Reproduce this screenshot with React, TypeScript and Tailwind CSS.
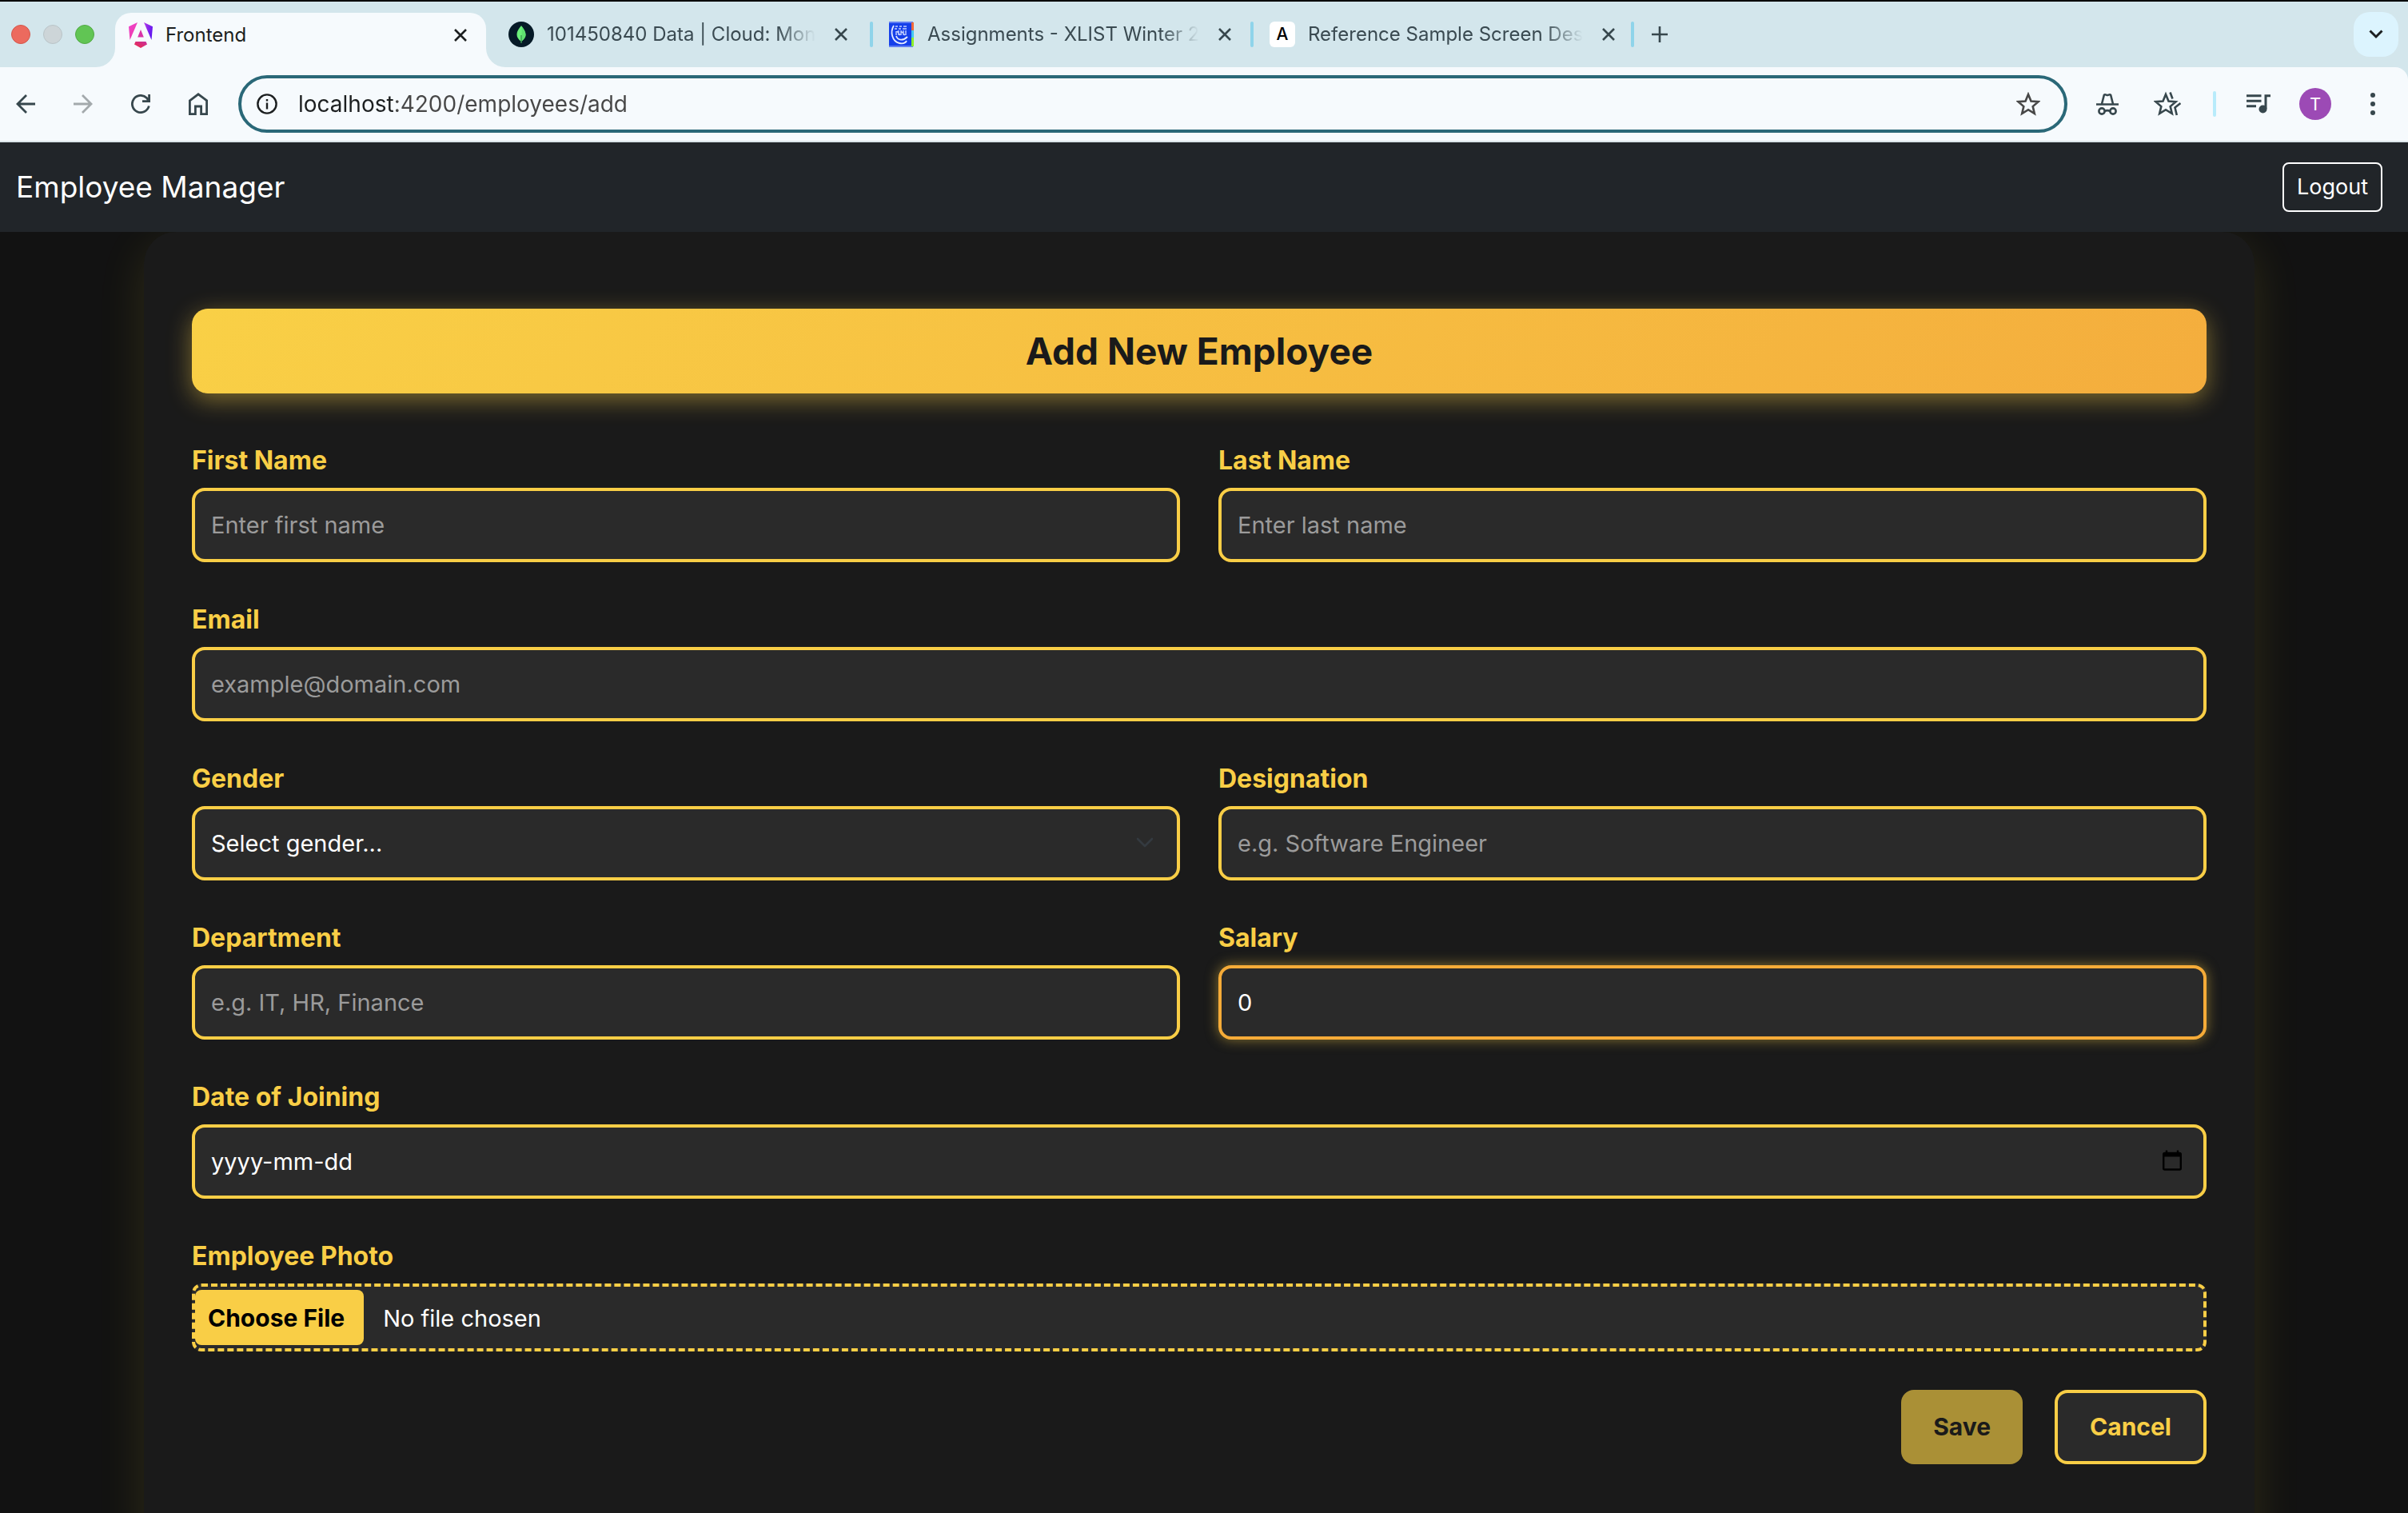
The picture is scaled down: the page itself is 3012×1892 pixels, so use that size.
import React from 'react';

const field =
  'block w-full h-[93px] rounded-[16px] border-4 border-[#f9ce46] bg-[#2a2a2a] px-5 text-[29px] leading-[45px] text-white placeholder:text-[#9b9b9b] outline-none';
const labelCls = 'block mb-2.5 text-[32px] leading-[48px] font-bold text-[#f9ce46]';

function Field({ label, id, children }: { label: string; id: string; children: React.ReactNode }) {
  return (
    <div>
      <label htmlFor={id} className={labelCls}>{label}</label>
      {children}
    </div>
  );
}

function Cross() {
  return (
    <svg viewBox="0 0 16 16" className="size-4" fill="none" stroke="currentColor" strokeWidth="2.6">
      <path d="M1 1L15 15M15 1L1 15" />
    </svg>
  );
}

function AngularIcon() {
  return (
    <svg viewBox="0 0 30 32" className="w-[30px] h-8 shrink-0">
      <defs>
        <linearGradient id="wing-left" x1="0" y1="0" x2="0.6" y2="1">
          <stop offset="0" stopColor="#ee45d0" />
          <stop offset="1" stopColor="#ee3aa6" />
        </linearGradient>
        <linearGradient id="wing-right" x1="0" y1="0" x2="1" y2="0.5">
          <stop offset="0" stopColor="#b63de6" />
          <stop offset="1" stopColor="#5f14f0" />
        </linearGradient>
        <linearGradient id="chin" x1="0" y1="1" x2="1" y2="0">
          <stop offset="0" stopColor="#ee2a44" />
          <stop offset="1" stopColor="#c730a0" />
        </linearGradient>
      </defs>
      <path d="M11 0L1.500 22L0 5.300Z" fill="url(#wing-left)" />
      <path d="M19 0L30 5.300L28.500 22Z" fill="url(#wing-right)" />
      <path d="M15 9L18.800 18.500H11.200Z" fill="#d934a8" />
      <path d="M8.500 24H21.500L23 27.500L15 32L7 27.500Z" fill="url(#chin)" />
    </svg>
  );
}

function LeafIcon() {
  return (
    <svg viewBox="0 0 32 32" className="size-8 shrink-0">
      <circle cx="16" cy="16" r="16" fill="#061a27" />
      <path d="M16 5C19 9 21.500 12 21.500 16.500C21.500 20 19 22.500 16.600 24.500L16.400 27H15.600L15.400 24.500C13 22.500 10.500 20 10.500 16.500C10.500 12 13 9 16 5Z" fill="#6cf07a" />
      <path d="M16.600 6C18.500 9.500 21.500 12.500 21.500 16.500C21.500 20 18.800 22.300 16.600 24.500Z" fill="#5fe070" />
      <path d="M16 17V27" stroke="#1f5a3a" strokeWidth="0.800" />
    </svg>
  );
}

function CampusIcon() {
  return (
    <svg viewBox="0 0 32 32" className="size-8 shrink-0">
      <rect width="28" height="32" fill="#1540ea" />
      <rect width="30" height="2" fill="#5f7ef2" />
      <rect y="30" width="30" height="2" fill="#5f7ef2" />
      <rect x="28" y="1" width="3" height="10" fill="#f26a3a" />
      <rect x="28" y="11" width="3" height="9" fill="#46c8f0" />
      <rect x="28" y="20" width="3" height="11" fill="#8cf02c" />
      <path d="M6 5C1 13 4 25 13 27C18 28 21 26 22 24M9 18C11 24 18 24 23 19" fill="none" stroke="#e6ecff" strokeWidth="1.800" />
      <path d="M8 6H11M13 6H16M18 6H22M7 9H10M12 9H15M17 9H22" fill="none" stroke="#c6d2ff" strokeWidth="1.600" />
      <path d="M9 12V17M12 11V17M15 11V17M18 11V17M21 11V17M10 12L14 17M15 12L20 17" fill="none" stroke="#c6d2ff" strokeWidth="1.400" />
    </svg>
  );
}

function Tab({ icon, title }: { icon: React.ReactNode; title: string }) {
  return (
    <div className="flex flex-1 items-center">
      {icon}
      <span className="ml-4 flex-1 whitespace-nowrap text-[24px] leading-8 text-[#3a4a51] [mask-image:linear-gradient(to_right,black_86%,transparent)]">
        {title}
      </span>
      <button aria-label={'Close ' + title} className="ml-6 text-[#37474d]"><Cross /></button>
    </div>
  );
}

const Divider = () => <span className="w-1 h-8 rounded-full bg-[#8fd4ea]" />;

function BrowserChrome() {
  return (
    <header className="bg-[#d3e6ec] border-t-2 border-black">
      <div className="flex h-[82px] items-center">
        <div className="flex w-36 gap-4 pl-[14px]">
          <span className="size-6 rounded-full border border-[#d3574b] bg-[#ec6a5e]" />
          <span className="size-6 rounded-full border border-[#b9c4c8] bg-[#cdd5d8]" />
          <span className="size-6 rounded-full border border-[#52a944] bg-[#61c554]" />
        </div>
        <div className="relative flex w-[464px] h-[68px] self-end items-center rounded-t-[20px] bg-[#f6fafd] pl-[17px] pr-6 pb-3">
          <svg viewBox="0 0 24 24" className="absolute -left-6 bottom-0 size-6"><path d="M24 0V24H0A24 24 0 0 0 24 0Z" fill="#f6fafd" /></svg>
          <svg viewBox="0 0 24 24" className="absolute -right-6 bottom-0 size-6"><path d="M0 0V24H24A24 24 0 0 1 0 0Z" fill="#f6fafd" /></svg>
          <AngularIcon />
          <span className="ml-4 flex-1 text-[24px] leading-8 text-[#1c1f20]">Frontend</span>
          <button aria-label="Close Frontend" className="text-[#1c1f20]"><Cross /></button>
        </div>
        <div className="flex w-[480px] px-7"><Tab icon={<LeafIcon />} title="101450840 Data | Cloud: Mon" /></div>
        <Divider />
        <div className="flex w-[472px] pl-5 pr-8"><Tab icon={<CampusIcon />} title="Assignments - XLIST Winter 2" /></div>
        <Divider />
        <div className="flex w-[472px] pl-5 pr-8">
          <Tab
            icon={<span className="flex size-8 shrink-0 items-center justify-center rounded-md bg-white text-[21px] font-medium text-black">A</span>}
            title="Reference Sample Screen Des"
          />
        </div>
        <Divider />
        <button aria-label="New tab" className="ml-[22px] text-[#37474d]">
          <svg viewBox="0 0 20 20" className="size-5" fill="none" stroke="currentColor" strokeWidth="2.600"><path d="M10 0V20M0 10H20" /></svg>
        </button>
        <button aria-label="Search tabs" className="ml-auto mr-3 flex size-14 items-center justify-center rounded-[20px] bg-[#dcf4fe] text-[#1c1f20]">
          <svg viewBox="0 0 18 12" className="w-[18px] h-3" fill="none" stroke="currentColor" strokeWidth="3"><path d="M1.500 1.500L9 9L16.500 1.500" /></svg>
        </button>
      </div>

      <div className="flex h-[94px] items-center rounded-tr-2xl border-b-2 border-[#dce5e9] bg-[#f6fafd] pr-10 text-[#37474d]">
        <nav className="flex w-[298px] items-center gap-12 pl-5">
          <button aria-label="Back"><svg viewBox="0 0 24 24" className="size-6" fill="none" stroke="currentColor" strokeWidth="2.800"><path d="M24 12H2M13 1L2 12L13 23" /></svg></button>
          <button aria-label="Forward" className="text-[#a3a9ac]"><svg viewBox="0 0 24 24" className="size-6" fill="none" stroke="currentColor" strokeWidth="2.800"><path d="M0 12H22M11 1L22 12L11 23" /></svg></button>
          <button aria-label="Reload"><svg viewBox="0 0 24 24" className="size-6" fill="none" stroke="currentColor" strokeWidth="2.800"><path d="M22.300 14.500A10.600 10.600 0 1 1 19.500 4.500L22 8M22.600 0V8.600H14" /></svg></button>
          <button aria-label="Home"><svg viewBox="0 0 24 28" className="w-6 h-7" fill="none" stroke="currentColor" strokeWidth="2.800"><path d="M1.400 9.800L12 1.800L22.600 9.800V26.600H15.600V17H8.400V26.600H1.400Z" /></svg></button>
        </nav>
        <div className="flex h-[72px] flex-1 items-center rounded-full border-4 border-[#2a6878] pl-[19px] pr-[30px]">
          <svg viewBox="0 0 28 28" className="size-[26px] text-[#1c1f20]" fill="none" stroke="currentColor" strokeWidth="2.600"><circle cx="14" cy="14" r="12.500" /><path d="M14 12.500V21M14 7.500V10.300" /></svg>
          <input
            aria-label="Address"
            defaultValue="localhost:4200/employees/add"
            className="ml-[26px] min-w-0 flex-1 bg-[linear-gradient(to_right,#1c1f20_122px,#474747_122px)] bg-clip-text text-[28px] leading-9 text-transparent outline-none"
          />
          <button aria-label="Bookmark" className="text-[#474747]"><svg viewBox="1 1 30 30" className="size-[30px]" fill="none" stroke="currentColor" strokeWidth="2.600"><path d="M16 4L19.500 12.500L28.500 13.200L21.700 19.100L23.800 28L16 23.200L8.200 28L10.300 19.100L3.500 13.200L12.500 12.500Z" /></svg></button>
        </div>
        <button aria-label="Incognito" className="ml-9">
          <svg viewBox="0 0 28 28" className="size-7" fill="none" stroke="currentColor" strokeWidth="2.600">
            <path d="M0 14.500H28M7 14L9.800 3C11 1.200 12.500 3 14 3S17 1.200 18.200 3L21 14M10.500 23Q14 21.300 17.500 23" />
            <circle cx="7" cy="23" r="3.600" /><circle cx="21" cy="23" r="3.600" />
          </svg>
        </button>
        <button aria-label="Favourites" className="ml-11"><svg viewBox="1 0 34 32" className="w-[34px] h-8" fill="none" stroke="currentColor" strokeWidth="2.600"><path d="M16 4L19.500 12.500L28.500 13.200L21.700 19.100L23.800 28L16 23.200L8.200 28L10.300 19.100L3.500 13.200L12.500 12.500Z" /><path d="M21.500 1.500L24.500 9.500M34.500 15L27.500 20.500L29.800 30" /></svg></button>
        <span className="ml-10 w-1 h-8 rounded-full bg-[#b8ebfb]" />
        <button aria-label="Media" className="ml-[38px]"><svg viewBox="0 0 30 24" className="w-[30px] h-6" fill="none" stroke="currentColor" strokeWidth="3"><path d="M0 1.800H18.500M0 8.200H18.500M0 14.700H12M24 18V1.800H30" /><circle cx="20.500" cy="18.500" r="5" fill="currentColor" stroke="none" /></svg></button>
        <button aria-label="Profile" className="ml-9 flex size-10 items-center justify-center rounded-full bg-[#9c4ab5] text-[22px] leading-none text-white">T</button>
        <button aria-label="Menu" className="ml-12"><svg viewBox="0 0 8 28" className="w-2 h-7" fill="currentColor"><circle cx="4" cy="3" r="3" /><circle cx="4" cy="14" r="3" /><circle cx="4" cy="25" r="3" /></svg></button>
      </div>
    </header>
  );
}

export default function App() {
  return (
    <div className="flex h-screen flex-col overflow-hidden bg-[#121212] [font-family:Inter,Roboto,sans-serif]">
      <BrowserChrome />
      <div className="relative z-10 flex h-28 shrink-0 items-center justify-between bg-[#212529] pl-5 pr-8 text-white">
        <a href="#home" className="text-[37px] leading-[60px]">Employee Manager</a>
        <button className="h-[62px] rounded-[8px] border-2 border-white px-4 text-[27px] leading-[42px]">Logout</button>
      </div>
      <main className="mr-[192px] ml-[180px] shrink-0 rounded-[40px] bg-[#1a1a1a] px-[60px] pt-24 pb-30 shadow-[0_16px_60px_rgba(249,220,50,0.12)]">
        <h1 className="mb-[60px] flex h-[106px] items-center justify-center rounded-[20px] bg-[linear-gradient(135deg,#f9d046,#f4ad3d)] text-[46px] font-bold text-[#1a1a1a] shadow-[0_8px_30px_rgba(249,206,70,0.45)]">
          Add New Employee
        </h1>
        <form className="grid grid-cols-2 gap-x-12 gap-y-12" onSubmit={(e) => e.preventDefault()}>
          <Field label="First Name" id="first"><input id="first" placeholder="Enter first name" className={field} /></Field>
          <Field label="Last Name" id="last"><input id="last" placeholder="Enter last name" className={field} /></Field>
          <div className="col-span-2"><Field label="Email" id="email"><input id="email" type="email" placeholder="example@domain.com" className={field} /></Field></div>
          <Field label="Gender" id="gender">
            <div className="relative">
              <select id="gender" className={field + ' appearance-none'}><option>Select gender...</option><option>Male</option><option>Female</option></select>
              <svg viewBox="0 0 22 14" className="pointer-events-none absolute right-[33px] top-[39px] w-[22px] h-[14px]" fill="none" stroke="#343a40" strokeWidth="2.600" strokeLinecap="round" strokeLinejoin="round"><path d="M2 2L11 11L20 2" /></svg>
            </div>
          </Field>
          <Field label="Designation" id="designation"><input id="designation" placeholder="e.g. Software Engineer" className={field} /></Field>
          <Field label="Department" id="department"><input id="department" placeholder="e.g. IT, HR, Finance" className={field} /></Field>
          <Field label="Salary" id="salary"><input id="salary" inputMode="numeric" defaultValue="0" className="block w-full h-[93px] rounded-[16px] border-4 border-[#f5ab38] bg-[#2a2a2a] px-5 text-[29px] leading-[45px] text-white outline-none shadow-[0_0_16px_rgba(249,206,70,0.5)]" /></Field>
          <div className="col-span-2">
            <Field label="Date of Joining" id="date">
              <div className="relative">
                <input id="date" defaultValue="yyyy-mm-dd" className={field} />
                <svg viewBox="0 0 24 26" className="pointer-events-none absolute right-[31px] top-8 w-6 h-[26px]" fill="none" stroke="black" strokeWidth="2.400"><rect x="1.200" y="4" width="21.600" height="20.500" rx="1.500" /><path d="M1 6H23" strokeWidth="5" /><path d="M5 0.500V4M19 0.500V4" /></svg>
              </div>
            </Field>
          </div>
          <div className="col-span-2">
            <Field label="Employee Photo" id="photo">
              <input id="photo" type="file" className="block w-full h-[85px] rounded-[12px] border-4 border-dashed border-[#f9ce46] bg-[#2a2a2a] py-1 text-[29px] leading-[42px] text-white file:mr-6 file:h-[69px] file:rounded-[8px] file:bg-[#f9ce46] file:pl-4 file:pr-6 file:text-[30px] file:font-bold file:text-black" />
            </Field>
          </div>
          <div className="col-span-2 flex justify-end gap-10">
            <button type="submit" className="h-[93px] rounded-[16px] bg-[#aa9036] px-10 text-[30px] font-bold text-[#1a1a1a]">Save</button>
            <button type="button" className="h-[93px] rounded-[16px] border-4 border-[#f9ce46] bg-[#2a2a2a] px-10 text-[30px] font-bold text-[#f9ce46]">Cancel</button>
          </div>
        </form>
      </main>
    </div>
  );
}
